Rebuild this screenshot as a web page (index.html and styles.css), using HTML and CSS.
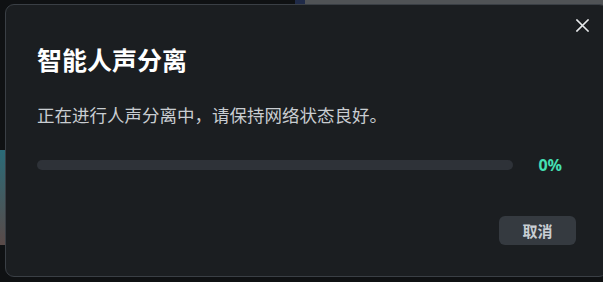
FILE: index.html
```html
<!DOCTYPE html>
<html lang="zh-CN">
<head>
<meta charset="utf-8">
<title>智能人声分离</title>
<link rel="stylesheet" href="styles.css">
</head>
<body>
<div class="backdrop">
  <div class="top-strip"><span class="top-blue"></span></div>
  <div class="side-thumb"></div>
</div>
<div class="dialog">
  <button class="close" aria-label="关闭">
    <svg width="13" height="13" viewBox="0 0 13 13"><path d="M1 1 L12 12 M12 1 L1 12" stroke="#e6e8ea" stroke-width="1.6" fill="none" stroke-linecap="square"/></svg>
  </button>
  <h1 class="title">智能人声分离</h1>
  <p class="msg">正在进行人声分离中，请保持网络状态良好。</p>
  <div class="progress-row">
    <div class="bar"><div class="fill" style="width:0%"></div></div>
    <span class="pct">0%</span>
  </div>
  <div class="actions">
    <button class="btn">取消</button>
  </div>
</div>
</body>
</html>
```

FILE: styles.css
```css
html, body {
  margin: 0;
  padding: 0;
  width: 603px;
  height: 282px;
  overflow: hidden;
  background: #0f1113;
  font-family: "Noto Sans CJK SC", "Noto Sans", sans-serif;
}
.backdrop {
  position: absolute;
  left: 0;
  top: 0;
  width: 603px;
  height: 282px;
}
.top-strip {
  position: absolute;
  left: 295px;
  top: 0;
  width: 308px;
  height: 5px;
  background: #505356;
}
.top-blue {
  display: block;
  width: 10px;
  height: 5px;
  background: #1f2a48;
}
.side-thumb {
  position: absolute;
  left: 0;
  top: 150px;
  width: 6px;
  height: 95px;
  background: linear-gradient(#2a6b78, #5a4a48);
}
.dialog {
  position: relative;
  margin: 4px 0 0 5px;
  width: 603px;
  height: 273px;
  box-sizing: border-box;
  padding: 42px 31px 0 31px;
  background: #1b1e21;
  border: 1.5px solid #3a3f45;
  border-radius: 9px;
}
.close {
  position: absolute;
  right: 18px;
  top: 14px;
  padding: 0;
  border: 0;
  background: none;
  width: 13px;
  height: 13px;
  display: flex;
}
.title {
  margin: 0;
  font-size: 25px;
  line-height: 25px;
  font-weight: 700;
  color: #ffffff;
}
.msg {
  margin: 34px 0 0 0;
  font-size: 17.5px;
  line-height: 17px;
  color: #c9cdd1;
}
.progress-row {
  margin-top: 32px;
  height: 20px;
  display: flex;
  align-items: center;
}
.bar {
  flex: 1;
  height: 10px;
  border-radius: 5px;
  background: #2e3238;
  margin-right: 25px;
  overflow: hidden;
}
.fill {
  height: 100%;
  background: #3fe0b0;
}
.pct {
  font-family: "Noto Sans", sans-serif;
  font-size: 16px;
  font-weight: 700;
  color: #45e0b4;
  margin-right: 14px;
}
.actions {
  margin-top: 41px;
  display: flex;
  justify-content: flex-end;
}
.btn {
  width: 77px;
  height: 29px;
  border: 0;
  border-radius: 6px;
  background: #353a40;
  color: #c8cdd3;
  font-family: "Noto Sans CJK SC", sans-serif;
  font-size: 15px;
  font-weight: 700;
  padding: 0;
}
```
